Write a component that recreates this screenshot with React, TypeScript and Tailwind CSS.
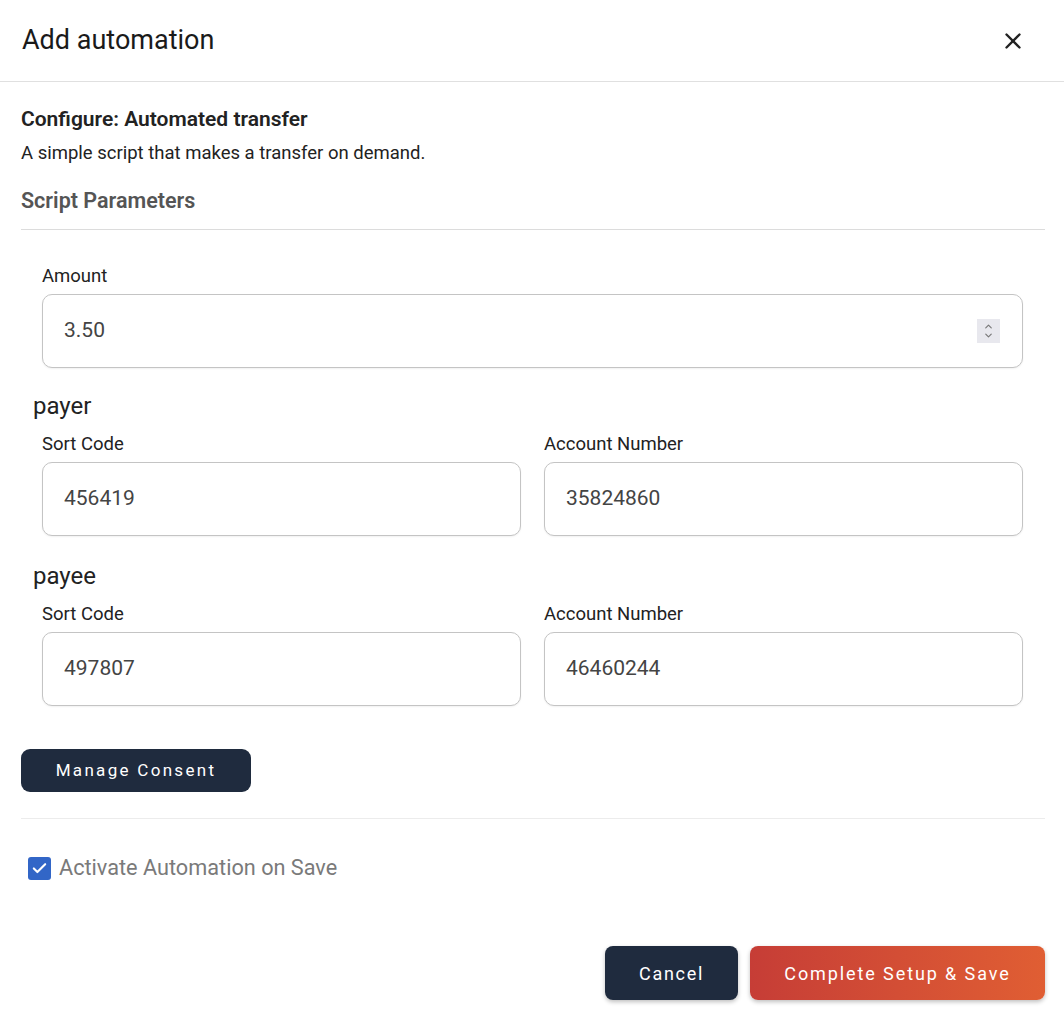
import { X, Check, ChevronUp, ChevronDown } from "lucide-react";

const Field = ({ label, value, spinner }: { label: string; value: string; spinner?: boolean }) => (
  <div className="flex flex-col">
    <label className="pt-[2px] text-[18.5px] leading-6 text-[#222]">{label}</label>
    <div className="mt-[6px] flex h-[74px] items-center justify-between rounded-[10px] border border-[#c4c4c4] bg-white pl-[21px] pr-[22px] shadow-[0_1px_2px_rgba(0,0,0,0.06)]">
      <span className="text-[21px] text-[#444]">{value}</span>
      {spinner && (
        <div className="flex h-[24px] w-[23px] flex-col items-center justify-center bg-[#e8e8ee] text-[#777]">
          <ChevronUp size={11} strokeWidth={2.5} className="-mb-[1px]" />
          <ChevronDown size={11} strokeWidth={2.5} className="-mt-[1px]" />
        </div>
      )}
    </div>
  </div>
);

const Party = ({ name, sort, account }: { name: string; sort: string; account: string }) => (
  <div className="flex flex-col">
    <div className="pl-[12px] text-[24px] leading-7 text-[#222]">{name}</div>
    <div className="mt-[10px] grid grid-cols-2 gap-x-[23px] pl-[21px] pr-[22px]">
      <Field label="Sort Code" value={sort} />
      <Field label="Account Number" value={account} />
    </div>
  </div>
);

export default function App() {
  return (
    <div className="min-h-screen w-[1064px] bg-white font-['Roboto',sans-serif]">
      <header className="flex h-[82px] items-center justify-between border-b border-[#e0e0e0] pl-[22px] pr-[38px]">
        <h1 className="text-[27px] text-[#1a1a1a]">Add automation</h1>
        <X size={26} strokeWidth={2.2} className="text-[#222]" />
      </header>

      <div className="pl-[21px] pr-[19px]">
        <h2 className="mt-[23px] text-[21px] font-semibold leading-7 text-[#222]">Configure: Automated transfer</h2>
        <p className="mt-[8px] text-[18.5px] leading-6 text-[#222]">A simple script that makes a transfer on demand.</p>
        <h3 className="mt-[22px] border-b border-[#dcdcdc] pb-[14px] text-[21.5px] font-semibold leading-7 text-[#555]">
          Script Parameters
        </h3>

        <div className="mt-[32px] pl-[21px] pr-[22px]">
          <Field label="Amount" value="3.50" spinner />
        </div>

        <div className="mt-[24px] flex flex-col gap-[26px]">
          <Party name="payer" sort="456419" account="35824860" />
          <Party name="payee" sort="497807" account="46460244" />
        </div>

        <button className="mt-[43px] h-[43px] w-[230px] rounded-[9px] bg-[#1f2b3e] text-[17px] tracking-[2.3px] text-white">
          Manage Consent
        </button>

        <div className="mt-[26px] border-t border-[#ececec]" />

        <label className="mt-[35px] flex h-[28px] items-center gap-[8px] pl-[7px]">
          <span className="flex h-[23px] w-[23px] items-center justify-center rounded-[3px] bg-[#3266c7]">
            <Check size={17} strokeWidth={3} className="text-white" />
          </span>
          <span className="text-[21.7px] text-[#7a7a7a]">Activate Automation on Save</span>
        </label>

        <div className="mt-[64px] flex justify-end gap-[12px]">
          <button className="h-[54px] w-[133px] rounded-[8px] bg-[#1f2b3e] text-[18px] tracking-[1.7px] text-white shadow-[0_2px_4px_rgba(0,0,0,0.25)]">
            Cancel
          </button>
          <button className="h-[54px] w-[295px] rounded-[8px] bg-gradient-to-r from-[#c63d36] to-[#e05e33] text-[18px] tracking-[1.9px] text-white shadow-[0_2px_4px_rgba(0,0,0,0.25)]">
            Complete Setup &amp; Save
          </button>
        </div>
      </div>
    </div>
  );
}
